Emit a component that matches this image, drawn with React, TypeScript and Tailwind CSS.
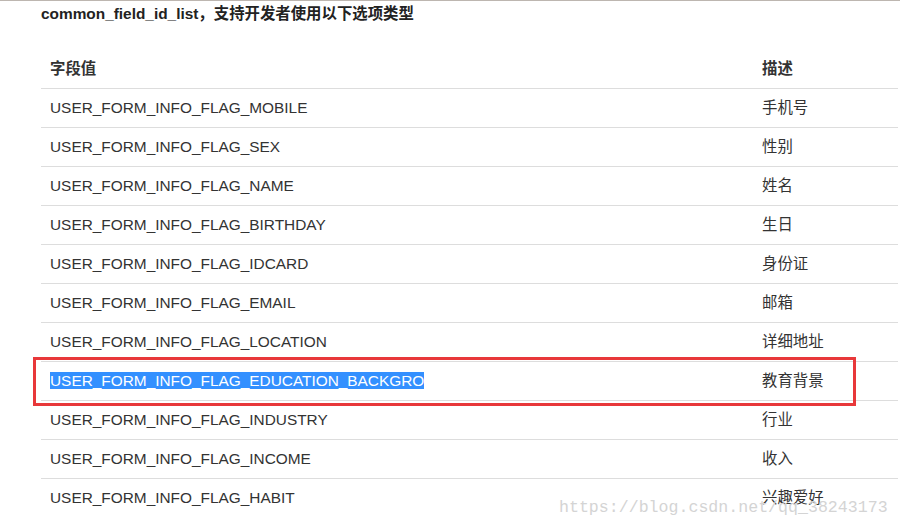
const rows: [string, string][] = [
  ["USER_FORM_INFO_FLAG_MOBILE", "手机号"],
  ["USER_FORM_INFO_FLAG_SEX", "性别"],
  ["USER_FORM_INFO_FLAG_NAME", "姓名"],
  ["USER_FORM_INFO_FLAG_BIRTHDAY", "生日"],
  ["USER_FORM_INFO_FLAG_IDCARD", "身份证"],
  ["USER_FORM_INFO_FLAG_EMAIL", "邮箱"],
  ["USER_FORM_INFO_FLAG_LOCATION", "详细地址"],
  ["USER_FORM_INFO_FLAG_EDUCATION_BACKGRO", "教育背景"],
  ["USER_FORM_INFO_FLAG_INDUSTRY", "行业"],
  ["USER_FORM_INFO_FLAG_INCOME", "收入"],
  ["USER_FORM_INFO_FLAG_HABIT", "兴趣爱好"],
];

const font = "font-['Liberation_Sans','Noto_Sans_CJK_SC',sans-serif]";

export default function App() {
  return (
    <div className={`relative w-[900px] h-[529px] overflow-hidden bg-white text-[#333] ${font}`}>
      <div className="h-px bg-[#bdb6b0]" />
      <div className="pl-[41px] pr-[2px]">
        <p className="pt-[4px] h-[49px] text-[15.4px] leading-[18px] font-bold text-[#222]">
          common_field_id_list，支持开发者使用以下选项类型
        </p>

        <div className="flex flex-col">
          <div className="flex h-[38px] items-center text-[15.4px]">
            <div className="w-[712px] pl-[9px] font-bold">字段值</div>
            <div className="pl-[9px] font-bold">描述</div>
          </div>
          {rows.map(([key, desc], i) => (
            <div
              key={key}
              className="flex h-[39px] items-center border-t border-[#dddddd] text-[15.4px] leading-[18px]"
            >
              <div className="w-[712px] pl-[9px]">
                {i === 7 ? (
                  <span className="bg-[#3390ff] text-white">{key}</span>
                ) : (
                  key
                )}
              </div>
              <div className="pl-[9px]">{desc}</div>
            </div>
          ))}
        </div>
      </div>

      {/* highlight box drawn over the education row */}
      <div className="absolute left-[33px] top-[357px] w-[823px] h-[49px] border-[3px] border-[#e8383a]" />

      <div className="absolute left-[559px] top-[498px] text-[16.6px] leading-[20px] text-[#d4d4d4] font-['Liberation_Mono',monospace]">
        https://blog.csdn.net/qq_38243173
      </div>
    </div>
  );
}
